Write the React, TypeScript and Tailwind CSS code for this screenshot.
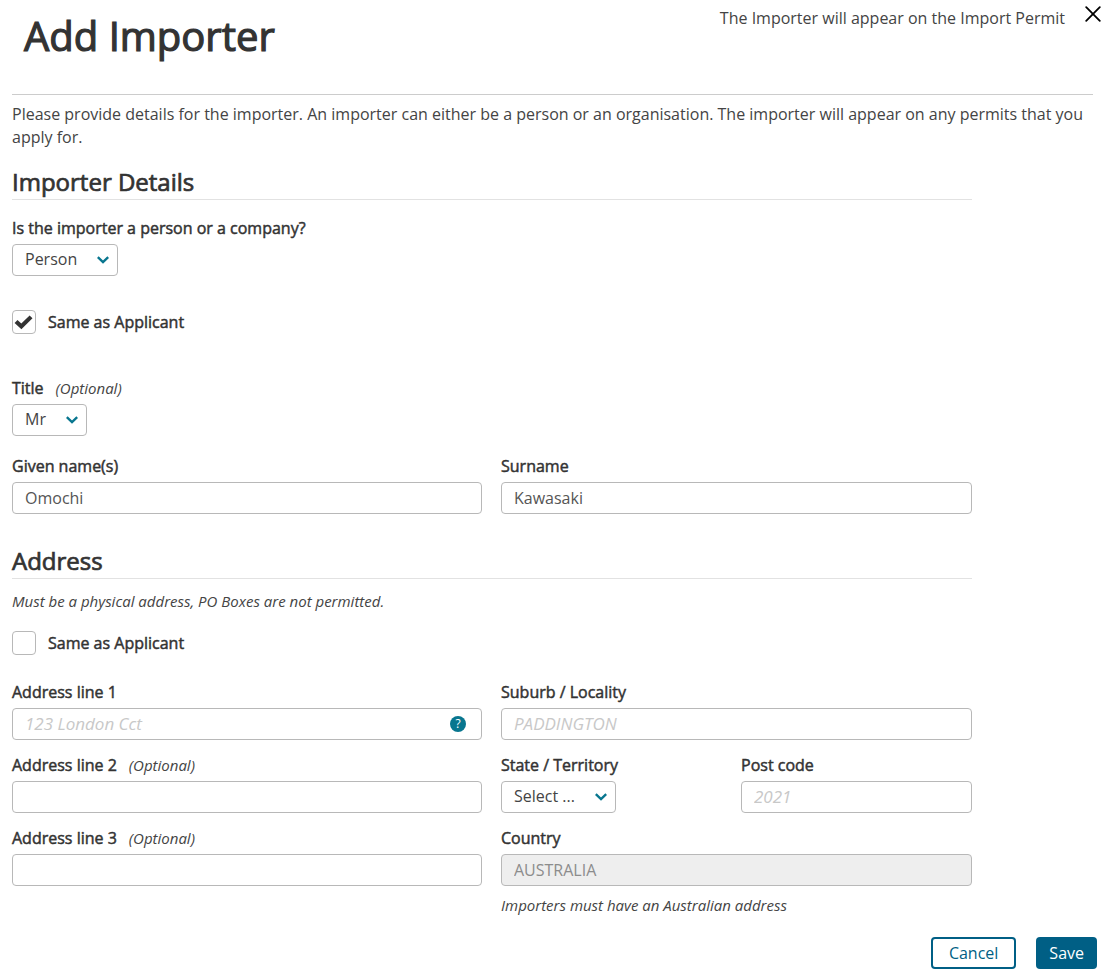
import { useState, type ReactNode } from "react";

interface FieldProps {
  id: string,
  label: string,
  optional?: boolean,
  children: ReactNode,
}

interface SelectProps {
  id: string,
  options: string[],
  width: string,
}

interface TickBoxProps {
  id: string,
  checked: boolean,
  onChange: (checked: boolean) => void,
}

const inputStyle = "block w-full h-8 rounded border border-[#b8b8b8] bg-white px-3 text-base text-[#555] placeholder:text-[17px] placeholder:italic placeholder:text-[#c8c8c8] disabled:bg-[#eee] disabled:text-[#8c8c8c]";
const boldStyle = "font-normal text-[#333] [-webkit-text-stroke:0.03em_#333]";

const Field = ({ id, label, optional, children }: FieldProps) => {
  return (
    <div>
      <div className="flex items-center gap-3 mb-1 leading-6">
        <label htmlFor={id} className={boldStyle}>{label}</label>
        {optional && <span className="text-[15px] leading-6 italic">(Optional)</span>}
      </div>
      {children}
    </div>
  )
}

const Select = ({ id, options, width }: SelectProps) => {
  return (
    <div className={`relative ${width}`}>
      <select id={id} className="block w-full h-8 appearance-none rounded border border-[#b8b8b8] bg-white pl-3 pr-8 pb-0.5 text-base text-[#444]">
        {options.map((option) => <option key={option}>{option}</option>)}
      </select>
      <svg className="pointer-events-none absolute right-[9px] top-3 h-2 w-3" viewBox="0 0 12 8" fill="none" stroke="#08768f" strokeWidth="2.4">
        <path d="M0.8 1.2 6 6.2 11.2 1.2" />
      </svg>
    </div>
  )
}

const TickBox = ({ id, checked, onChange }: TickBoxProps) => {
  return (
    <div className="flex items-center gap-3">
      <div className="relative h-6 w-6">
        <input
          id={id}
          type="checkbox"
          checked={checked}
          onChange={(e) => onChange(e.target.checked)}
          className="block h-6 w-6 appearance-none rounded border border-[#b8b8b8] bg-white"
        />
        {checked && (
          <svg className="pointer-events-none absolute inset-0 h-6 w-6" viewBox="0 0 24 24" fill="#333">
            <path d="M2.6 12.9 5.5 10 9.3 13.5 17.6 5.4 20.5 8.2 9.4 19.3Z" />
          </svg>
        )}
      </div>
      <label htmlFor={id} className={`leading-6 ${boldStyle}`}>Same as Applicant</label>
    </div>
  )
}

const SectionTitle = ({ children }: { children: ReactNode }) => {
  return <h2 className={`border-b border-[#e2e2e2] text-2xl leading-[34px] ${boldStyle}`}>{children}</h2>
}

const App = () => {
  const [sameName, setSameName] = useState(true);
  const [sameAddress, setSameAddress] = useState(false);

  return (
    <form className="bg-white text-base text-[#444] font-['Open_Sans',sans-serif]" onSubmit={(e) => e.preventDefault()}>
      <div className="px-3">
        <header className="flex h-[95px] items-start justify-between border-b border-[#ccc]">
          <h1 className={`pl-3 pt-[11px] text-[40px] leading-[50px] ${boldStyle}`}>Add Importer</h1>
          <div className="-mr-2 flex items-start gap-5 pt-1.5">
            <p className="leading-6">The Importer will appear on the Import Permit</p>
            <button type="button" aria-label="Close" className="h-4 w-4">
              <svg className="h-4 w-4" viewBox="0 0 16 16" fill="none" stroke="#000" strokeWidth="1.8" strokeLinecap="round">
                <path d="M1.2 1.2 14.8 14.8M14.8 1.2 1.2 14.8" />
              </svg>
            </button>
          </div>
        </header>

        <p className="pt-2 leading-[23px]">
          Please provide details for the importer. An importer can either be a person or an organisation. The importer will appear on any permits that you apply for.
        </p>

        <div className="max-w-[960px]">
          <section className="pt-4">
            <SectionTitle>Importer Details</SectionTitle>
            <div className="pt-4">
              <Field id="kind" label="Is the importer a person or a company?">
                <Select id="kind" width="w-[106px]" options={["Person", "Company"]} />
              </Field>
            </div>
            <div className="pt-[34px]">
              <TickBox id="same-name" checked={sameName} onChange={setSameName} />
            </div>
            <div className="pt-[42px]">
              <Field id="title" label="Title" optional>
                <Select id="title" width="w-[75px]" options={["Mr", "Mrs", "Ms", "Dr"]} />
              </Field>
            </div>
            <div className="grid grid-cols-[470fr_471fr] gap-[19px] pt-[18px]">
              <Field id="given" label="Given name(s)">
                <input id="given" type="text" defaultValue="Omochi" className={inputStyle} />
              </Field>
              <Field id="surname" label="Surname">
                <input id="surname" type="text" defaultValue="Kawasaki" className={inputStyle} />
              </Field>
            </div>
          </section>

          <section className="pt-[30px]">
            <SectionTitle>Address</SectionTitle>
            <p className="pt-[10px] text-[15px] leading-6 italic">Must be a physical address, PO Boxes are not permitted.</p>
            <div className="pt-[18px]">
              <TickBox id="same-address" checked={sameAddress} onChange={setSameAddress} />
            </div>
            <div className="grid grid-cols-[470fr_471fr] gap-[19px] pt-[25px]">
              <div className="flex flex-col gap-[13px]">
                <Field id="line1" label="Address line 1">
                  <div className="relative">
                    <input id="line1" type="text" placeholder="123 London Cct" className={inputStyle} />
                    <button type="button" aria-label="Help" className="absolute right-4 top-2 flex h-4 w-4 items-center justify-center rounded-full bg-[#08768f] text-xs leading-4 text-white">?</button>
                  </div>
                </Field>
                <Field id="line2" label="Address line 2" optional>
                  <input id="line2" type="text" className={inputStyle} />
                </Field>
                <Field id="line3" label="Address line 3" optional>
                  <input id="line3" type="text" className={inputStyle} />
                </Field>
              </div>
              <div className="flex flex-col gap-[13px]">
                <Field id="suburb" label="Suburb / Locality">
                  <input id="suburb" type="text" placeholder="PADDINGTON" className={inputStyle} />
                </Field>
                <div className="grid grid-cols-2 gap-[9px]">
                  <Field id="state" label="State / Territory">
                    <Select id="state" width="w-[115px]" options={["Select ...", "ACT", "NSW", "NT", "QLD", "SA", "TAS", "VIC", "WA"]} />
                  </Field>
                  <Field id="postcode" label="Post code">
                    <input id="postcode" type="text" placeholder="2021" className={inputStyle} />
                  </Field>
                </div>
                <div>
                  <Field id="country" label="Country">
                    <input id="country" type="text" defaultValue="AUSTRALIA" disabled className={inputStyle} />
                  </Field>
                  <p className="pt-[7px] text-[15px] leading-6 italic">Importers must have an Australian address</p>
                </div>
              </div>
            </div>
          </section>
        </div>
      </div>

      <footer className="flex justify-end gap-5 px-2 pt-5 pb-2">
        <button type="button" className="h-8 rounded border-2 border-[#005f85] bg-white px-4 leading-6 text-[#005f85]">Cancel</button>
        <button type="submit" className="h-8 rounded bg-[#005f85] px-[13px] leading-6 text-white">Save</button>
      </footer>
    </form>
  )
}

export default App;
